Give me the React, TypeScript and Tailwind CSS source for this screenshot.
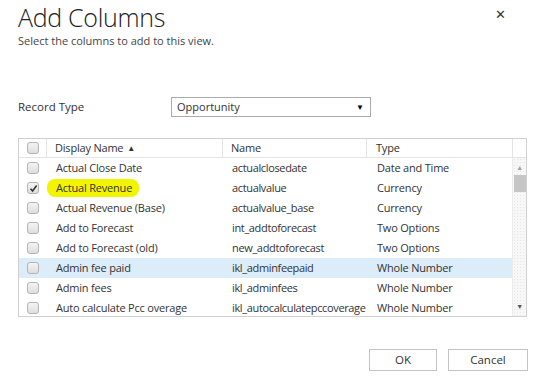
import React from 'react';

type Row = { label: string; name: string; type: string; checked?: boolean; marked?: boolean; selected?: boolean };

const ROWS: Row[] = [
  { label: 'Actual Close Date', name: 'actualclosedate', type: 'Date and Time' },
  { label: 'Actual Revenue', name: 'actualvalue', type: 'Currency', checked: true, marked: true },
  { label: 'Actual Revenue (Base)', name: 'actualvalue_base', type: 'Currency' },
  { label: 'Add to Forecast', name: 'int_addtoforecast', type: 'Two Options' },
  { label: 'Add to Forecast (old)', name: 'new_addtoforecast', type: 'Two Options' },
  { label: 'Admin fee paid', name: 'ikl_adminfeepaid', type: 'Whole Number', selected: true },
  { label: 'Admin fees', name: 'ikl_adminfees', type: 'Whole Number' },
  { label: 'Auto calculate Pcc overage', name: 'ikl_autocalculatepccoverage', type: 'Whole Number' },
];

const CheckBox = ({ checked }: { checked?: boolean }) => (
  <span className="flex h-[12px] w-[12px] items-center justify-center rounded-[3px] border border-[#b4b4b4] bg-gradient-to-b from-[#f4f4f4] to-[#dedede]">
    {checked && (
      <svg width="9" height="9" viewBox="0 0 9 9">
        <path d="M1.5 4.8 L3.6 7 L7.6 1.6" fill="none" stroke="#333" strokeWidth="1.6" />
      </svg>
    )}
  </span>
);

export default function App() {
  return (
    <div className="relative h-[377px] w-[546px] overflow-hidden bg-white pl-[18px] text-[#333] [font-family:'Open_Sans',sans-serif]">
      <button className="absolute right-[40px] top-[8px] text-[13px] leading-none text-[#333]">✕</button>

      <h1 className="text-[25px] font-light leading-[34px] tracking-[-0.3px] text-[#222]">Add Columns</h1>
      <p className="text-[11px] leading-[14px] text-[#444]">Select the columns to add to this view.</p>

      <div className="mt-[49px] flex items-center">
        <span className="w-[153px] text-[11.5px] text-[#333]">Record Type</span>
        <div className="flex h-[20px] w-[200px] items-center justify-between border border-[#ababab] pl-[5px] pr-[6px] text-[11px]">
          <span>Opportunity</span>
          <span className="text-[8px] text-black">▼</span>
        </div>
      </div>

      <div className="mt-[21px] w-[509px] border border-[#d0d0d0] text-[11px] tracking-[-0.2px]">
        <div className="flex h-[19px] items-center border-b border-[#e4e4e4]">
          <div className="flex h-full w-[28px] items-center justify-center border-r border-[#e4e4e4]">
            <CheckBox />
          </div>
          <div className="flex h-full w-[176px] items-center border-r border-[#e4e4e4] pl-[8px]">
            Display Name <span className="ml-[4px] text-[8px]">▲</span>
          </div>
          <div className="flex h-full w-[144px] items-center border-r border-[#e4e4e4] pl-[8px]">Name</div>
          <div className="flex h-full w-[146px] items-center border-r border-[#e4e4e4] pl-[9px]">Type</div>
          <div className="flex-1" />
        </div>

        <div className="flex h-[158px] overflow-hidden">
          <div className="flex-1">
            {ROWS.map((r) => (
              <div key={r.name} className={`flex h-[20px] shrink-0 items-center ${r.selected ? 'bg-[#dcecf9]' : ''}`}>
                <div className="flex w-[28px] justify-center">
                  <CheckBox checked={r.checked} />
                </div>
                <div className="relative w-[176px] pl-[9px]">
                  {r.marked && (
                    <span className="absolute left-[0px] top-[-1px] h-[18px] w-[92px] rounded-[8px] bg-[#f2f500] blur-[0.5px]" />
                  )}
                  <span className="relative">{r.label}</span>
                </div>
                <div className="w-[144px] pl-[9px] tracking-[-0.35px]">{r.name}</div>
                <div className="pl-[10px]">{r.type}</div>
              </div>
            ))}
          </div>
          <div className="relative flex w-[14px] flex-col items-center border-l border-[#ececec] bg-[#f7f7f7] [background-image:radial-gradient(#e6e6e6_0.6px,transparent_0.7px)] [background-size:3px_3px]">
            <span className="mt-[6px] text-[7px] leading-none text-[#a0a0a0]">▲</span>
            <span className="mt-[4px] h-[17px] w-[12px] bg-[#c6c6c6]" />
            <span className="mt-auto mb-[6px] text-[7px] leading-none text-[#555]">▼</span>
          </div>
        </div>
      </div>

      <div className="mt-[32px] flex justify-end gap-[11px] pr-[18px] text-[11.5px]">
        <button className="h-[22px] w-[68px] border border-[#c4c4c4] bg-white">OK</button>
        <button className="h-[22px] w-[80px] border border-[#c4c4c4] bg-white">Cancel</button>
      </div>
    </div>
  );
}
